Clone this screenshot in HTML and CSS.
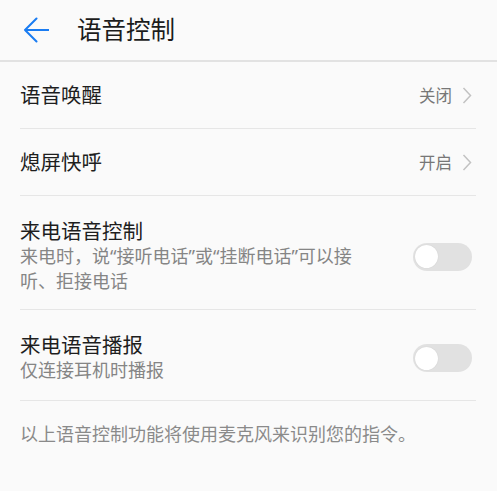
FILE: index.html
```html
<!DOCTYPE html>
<html lang="zh-CN">
<head>
    <meta charset="UTF-8">
    <title>语音控制</title>
    <link rel="stylesheet" href="styles.css">
</head>
<body>
    <header class="top-bar">
        <svg class="back-icon" width="26" height="26" viewBox="0 0 26 26">
            <path d="M2 13 H26 M13.5 1.5 L2 13 L13.5 24.5" fill="none" stroke="#1a7cf2" stroke-width="2" stroke-linecap="round" stroke-linejoin="round"/>
        </svg>
        <h1 class="page-title">语音控制</h1>
    </header>

    <div class="settings-list">
        <div class="setting-row">
            <div class="setting-text">
                <div class="setting-title">语音唤醒</div>
            </div>
            <div class="setting-value">关闭</div>
            <svg class="chevron" width="10" height="17" viewBox="0 0 10 17">
                <path d="M1.5 1 L8.5 8.5 L1.5 16" fill="none" stroke="#c2c2c2" stroke-width="1.5"/>
            </svg>
        </div>

        <div class="setting-row">
            <div class="setting-text">
                <div class="setting-title">熄屏快呼</div>
            </div>
            <div class="setting-value">开启</div>
            <svg class="chevron" width="10" height="17" viewBox="0 0 10 17">
                <path d="M1.5 1 L8.5 8.5 L1.5 16" fill="none" stroke="#c2c2c2" stroke-width="1.5"/>
            </svg>
        </div>

        <div class="setting-row tall">
            <div class="setting-text narrow">
                <div class="setting-title">来电语音控制</div>
                <div class="setting-sub">来电时，说“接听电话”或“挂断电话”可以接听、拒接电话</div>
            </div>
            <div class="switch"><span class="knob"></span></div>
        </div>

        <div class="setting-row tall">
            <div class="setting-text">
                <div class="setting-title">来电语音播报</div>
                <div class="setting-sub">仅连接耳机时播报</div>
            </div>
            <div class="switch"><span class="knob"></span></div>
        </div>
    </div>

    <p class="footnote">以上语音控制功能将使用麦克风来识别您的指令。</p>
</body>
</html>
```

FILE: styles.css
```css
/* Page base */
html, body {
    margin: 0;
    padding: 0;
    background-color: #fafafa;
    font-family: "Noto Sans", "Noto Sans CJK SC", sans-serif;
    color: #222;
}

/* Top bar */
.top-bar {
    display: flex;
    align-items: center;
    height: 60px;
    padding-left: 23px;
    border-bottom: 2px solid #e2e2e2;
}

.back-icon {
    flex: none;
}

.page-title {
    margin: 0 0 0 28px;
    font-size: 24.5px;
    font-weight: normal;
    color: #1c1c1c;
    line-height: 30px;
}

/* Settings list */
.settings-list {
    margin: 0 21px 0 20px;
}

.setting-row {
    display: flex;
    align-items: center;
    min-height: 66px;
    border-bottom: 1px solid #e6e6e6;
    padding-right: 4px;
}

.setting-row.tall {
    padding-top: 23px;
    padding-bottom: 15px;
    min-height: 0;
}

.setting-row.tall:last-child {
    padding-bottom: 17px;
}

.setting-text {
    flex: 1;
}

.setting-text.narrow {
    flex: none;
    width: 342px;
}

.setting-title {
    font-size: 20.5px;
    line-height: 24px;
    color: #1e1e1e;
}

.setting-sub {
    font-size: 18px;
    line-height: 25px;
    color: #858585;
    margin-top: 1px;
}

.setting-value {
    font-size: 16.5px;
    color: #777;
    margin-right: 10px;
}

.chevron {
    flex: none;
}

/* Toggle switch */
.switch {
    display: flex;
    align-items: center;
    flex: none;
    width: 59px;
    height: 28px;
    margin-left: auto;
    padding: 0 2px;
    box-sizing: border-box;
    border-radius: 14px;
    background-color: #e1e1e1;
}

.knob {
    width: 23px;
    height: 23px;
    border-radius: 50%;
    background-color: #fff;
    box-shadow: 0 0 1px rgba(0, 0, 0, 0.15);
}

/* Footnote */
.footnote {
    margin: 0;
    padding: 21px 20px 0;
    font-size: 18px;
    line-height: 25px;
    color: #8a8a8a;
}
```
